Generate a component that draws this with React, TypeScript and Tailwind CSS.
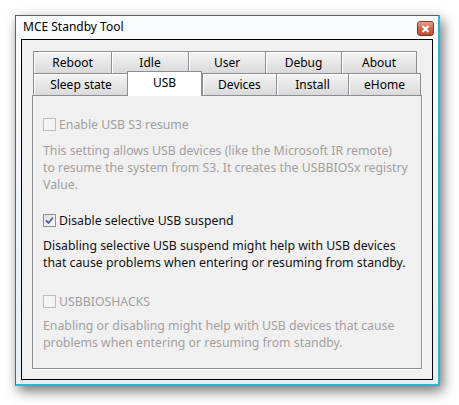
import React from "react";

const row1 = [
  { label: "Reboot", w: "w-[79px]" },
  { label: "Idle", w: "w-[78px]" },
  { label: "User", w: "w-[78px]" },
  { label: "Debug", w: "w-[77px]" },
  { label: "About", w: "w-[76px]" },
];

const Tab = ({ label, w, first }: { label: string; w: string; first?: boolean }) => (
  <div
    className={`${w} h-[22px] ${first ? "" : "-ml-px"} flex items-center justify-center border border-[#8c8e94] border-b-0 bg-gradient-to-b from-[#f5f5f5] to-[#d9d9d9] shadow-[inset_1px_1px_0_#ffffff] text-[12px] text-black`}
  >
    {label}
  </div>
);

const Check = ({ checked, disabled }: { checked?: boolean; disabled?: boolean }) => (
  <div
    className={`w-[13px] h-[13px] shrink-0 border flex items-center justify-center ${
      disabled ? "border-[#bdbdbd] bg-[#f4f4f4]" : "border-[#8e8f8f] bg-gradient-to-br from-[#dcdcdc] to-[#ffffff]"
    }`}
  >
    {checked && (
      <svg width="9" height="9" viewBox="0 0 9 9">
        <path d="M1 4.5 L3.5 7 L8 1.5" stroke="#4a5f97" strokeWidth="1.8" fill="none" />
      </svg>
    )}
  </div>
);

export default function App() {
  return (
    <div
      className="w-[459px] h-[405px] bg-white pl-[15px] pt-[15px]"
      style={{ fontFamily: '"Noto Sans", "Open Sans", sans-serif' }}
    >
      {/* window */}
      <div className="w-[425px] h-[371px] flex flex-col border border-[#5e6166] border-r-[2px] border-b-[2px] border-r-[#26b6d6] border-b-[#26b6d6] bg-gradient-to-b from-[#fbfcfd] via-[#f1f4f7] to-[#e9eef3] shadow-[3px_5px_12px_rgba(0,0,0,0.55)] px-[5px] pb-[4px]">
        <div className="h-[23px] flex items-start justify-between">
          <span className="mt-[2px] ml-[2px] text-[12px] text-black">MCE Standby Tool</span>
          <div className="mt-[5px] -mr-[1px] w-[17px] h-[15px] rounded-[3px] border border-[#7d3a2c] bg-gradient-to-b from-[#e8a08a] via-[#d2664a] to-[#c24a2e] flex items-center justify-center">
            <svg width="9" height="8" viewBox="0 0 9 8">
              <path d="M1.5 1 L7.5 7 M7.5 1 L1.5 7" stroke="#ffffff" strokeWidth="2" />
            </svg>
          </div>
        </div>

        {/* client area */}
        <div className="flex-1 border border-black bg-[#f0f0f0] pt-[11px] pl-[10px] pr-[10px] pb-[10px] flex flex-col">
          {/* tab rows */}
          <div className="flex pl-px">
            {row1.map((t, i) => (
              <Tab key={t.label} label={t.label} w={t.w} first={i === 0} />
            ))}
          </div>
          <div className="flex pl-px relative z-10">
            <Tab label="Sleep state" w="w-[96px]" first />
            <div className="w-[75px] h-[25px] -mt-[2px] -ml-[2px] -mb-px flex items-start justify-center pt-[2px] border border-[#8c8e94] border-b-0 bg-white text-[12px] text-black">
              USB
            </div>
            <Tab label="Devices" w="w-[75px]" first />
            <Tab label="Install" w="w-[73px]" />
            <Tab label="eHome" w="w-[73px]" />
          </div>

          {/* panel */}
          <div className="flex-1 border border-[#8c8e94] bg-[#f0f0f0] shadow-[1px_1px_0_#ffffff] pt-[20px] pl-[10px] pr-[8px] text-[12.3px] leading-[17px]">
            <div className="flex items-center gap-[3px] h-[17px] text-[#a0a0a0]">
              <Check disabled />
              <span>Enable USB S3 resume</span>
            </div>
            <p className="mt-[9px] text-[#a39f9f]">
              This setting allows USB devices (like the Microsoft IR remote)
              <br />
              to resume the system from S3. It creates the USBBIOSx registry
              <br />
              Value.
            </p>

            <div className="mt-[19px] flex items-center gap-[3px] h-[17px] text-[#111111]">
              <Check checked />
              <span>Disable selective USB suspend</span>
            </div>
            <p className="mt-[8px] text-[#111111]">
              Disabling selective USB suspend might help with USB devices
              <br />
              that cause problems when entering or resuming from standby.
            </p>

            <div className="mt-[22px] flex items-center gap-[3px] h-[17px] text-[#a0a0a0]">
              <Check disabled />
              <span>USBBIOSHACKS</span>
            </div>
            <p className="mt-[7px] text-[#a39f9f]">
              Enabling or disabling might help with USB devices that cause
              <br />
              problems when entering or resuming from standby.
            </p>
          </div>
        </div>
      </div>
    </div>
  );
}
